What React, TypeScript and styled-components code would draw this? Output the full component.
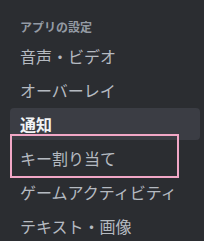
import React from "react";
import styled, { createGlobalStyle } from "styled-components";

const GlobalStyle = createGlobalStyle`
  html, body {
    margin: 0;
    padding: 0;
    background: #2b2d31;
  }
  body {
    font-family: "Noto Sans CJK JP", "Noto Sans", sans-serif;
  }
`;

const Sidebar = styled.nav`
  position: relative;
  width: 204px;
  height: 241px;
  overflow: hidden;
  box-sizing: border-box;
  padding: 5px 4px 0 10px;
  display: flex;
  flex-direction: column;
  background: #2b2d31;
`;

const Divider = styled.div`
  height: 1px;
  margin: 0 8px 10px 10px;
  background: #3f4147;
`;

const Header = styled.div`
  padding: 4px 10px 5px;
  font-size: 12px;
  line-height: 16px;
  font-weight: 700;
  color: #949ba4;
`;

const Item = styled.div<{ $selected?: boolean }>`
  flex: none;
  height: 32px;
  box-sizing: border-box;
  margin-bottom: 2px;
  padding: 6px 10px;
  border-radius: 4px;
  font-size: 16px;
  line-height: 20px;
  white-space: nowrap;
  color: ${(p) => (p.$selected ? "#f2f3f5" : "#b5bac1")};
  font-weight: ${(p) => (p.$selected ? 700 : 400)};
  background: ${(p) => (p.$selected ? "#3b3d44" : "transparent")};
`;

// pink annotation frame drawn over the list
const Highlight = styled.div`
  position: absolute;
  left: 10px;
  top: 134px;
  width: 169px;
  height: 44px;
  box-sizing: border-box;
  border: 2px solid #f1a7c6;
  pointer-events: none;
`;

const items = [
  { label: "音声・ビデオ" },
  { label: "オーバーレイ" },
  { label: "通知", selected: true },
  { label: "キー割り当て" },
  { label: "ゲームアクティビティ" },
  { label: "テキスト・画像" },
];

export default function App() {
  return (
    <>
      <GlobalStyle />
      <Sidebar>
        <Divider />
        <Header>アプリの設定</Header>
        {items.map((it) => (
          <Item key={it.label} $selected={it.selected}>
            {it.label}
          </Item>
        ))}
        <Highlight />
      </Sidebar>
    </>
  );
}
